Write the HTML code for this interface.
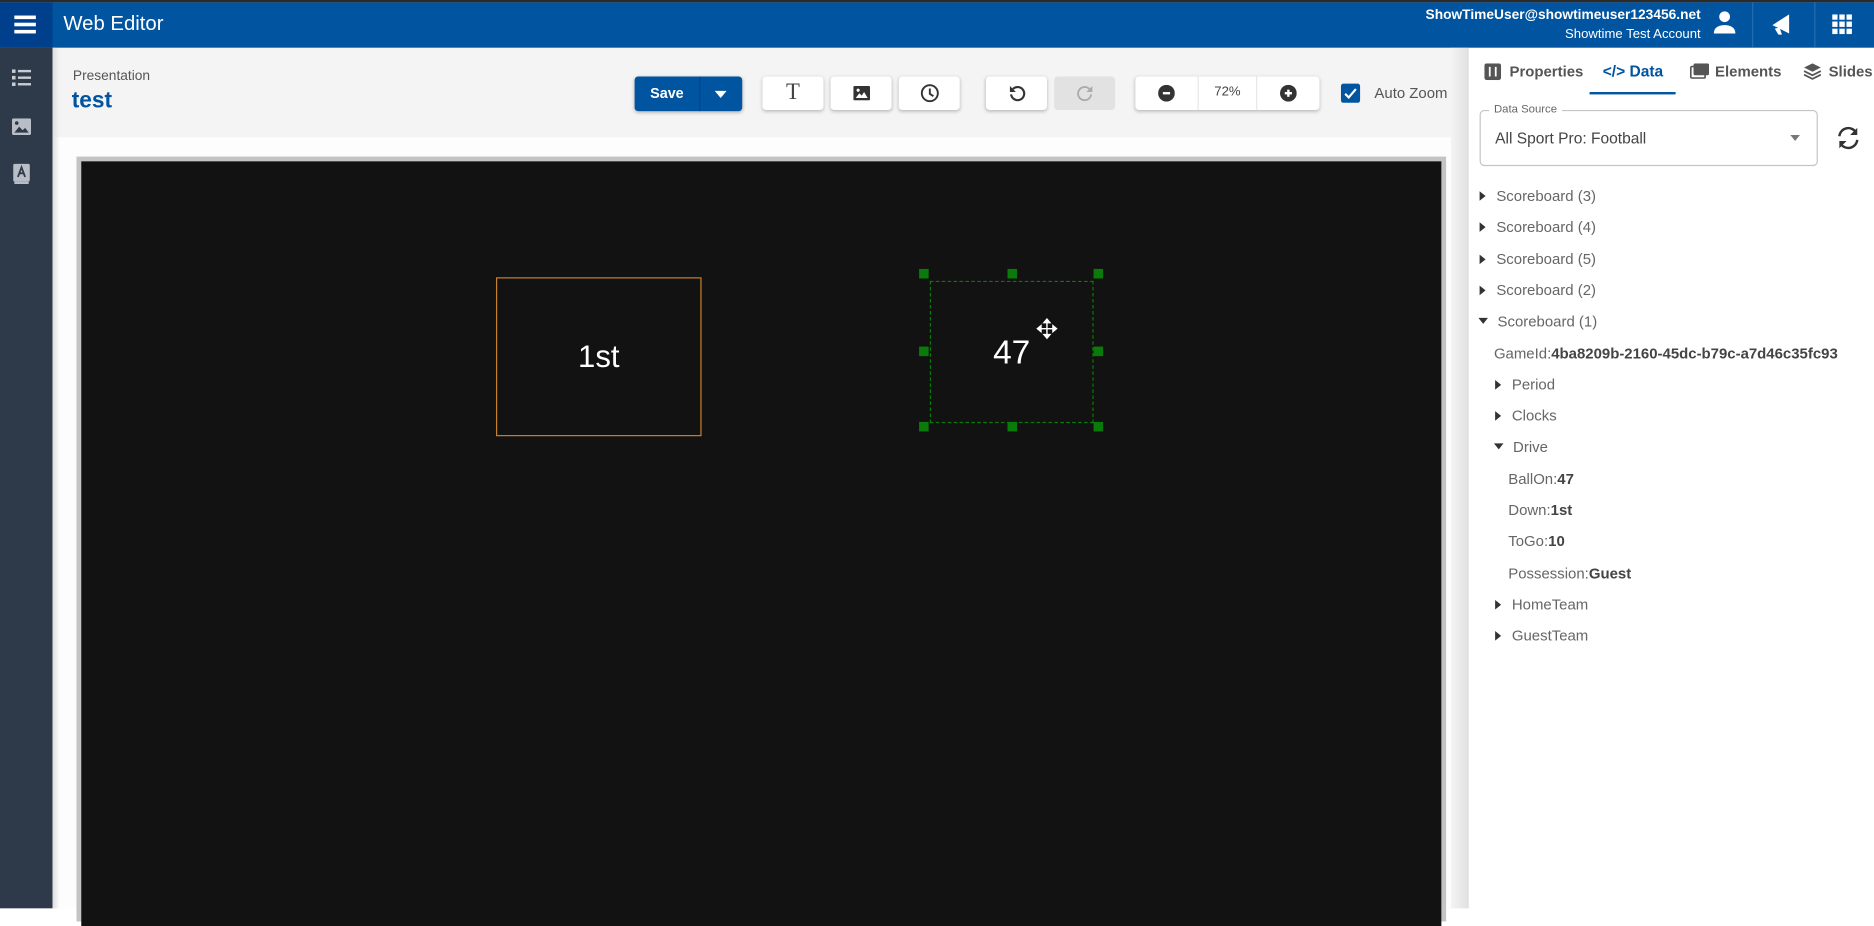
<!DOCTYPE html>
<html><head><meta charset="utf-8"><style>
html,body{margin:0;padding:0;width:1874px;height:872px;overflow:hidden;background:#fff;font-family:"Liberation Sans",sans-serif}
#w{position:absolute;left:0;top:0;width:1568px;height:760px;transform:scale(1.19515);transform-origin:0 0;background:#f4f4f4}
.a{position:absolute}
.btn{position:absolute;background:#fff;border-radius:3px;box-shadow:0 1px 3px rgba(0,0,0,.25);height:28px;top:64px;display:flex;align-items:center;justify-content:center}
.tr{position:absolute;font-size:12.5px;color:#666;white-space:nowrap}
.tr b{color:#444}
.ar{display:inline-block;width:0;height:0;border-top:4px solid transparent;border-bottom:4px solid transparent;border-left:5px solid #333;margin-right:9px;vertical-align:0}
.dn{display:inline-block;width:0;height:0;border-left:4px solid transparent;border-right:4px solid transparent;border-top:5px solid #333;margin-right:8px;vertical-align:2px}
</style></head><body><div id="w">
<div class="a" style="left:0;top:0;width:1568px;height:2px;background:#2a2a2a"></div>
<div class="a" style="left:0;top:2px;width:1568px;height:38px;background:#0054a0"></div>
<div class="a" style="left:0;top:2px;width:44px;height:38px;background:#003f8c"></div>
<div class="a" style="left:12px;top:13px;width:18px;height:3px;background:#fff;box-shadow:0 6px 0 #fff,0 12px 0 #fff"></div>
<div class="a" style="left:53px;top:10px;color:#fff;font-size:17px">Web Editor</div>
<div class="a" style="right:145px;top:7px;color:#fff;font-size:11.5px;font-weight:bold;text-align:right">ShowTimeUser@showtimeuser123456.net</div>
<div class="a" style="right:145px;top:23px;color:#fff;font-size:11px;text-align:right">Showtime Test Account</div>
<svg class="a" style="left:1432px;top:8px" width="22" height="22" viewBox="0 0 22 22"><circle cx="11" cy="6" r="4.5" fill="#fff"/><path d="M2 20c0-5 4-7 9-7s9 2 9 7z" fill="#fff"/></svg>
<div class="a" style="left:1466px;top:2px;width:1px;height:38px;background:#2a6ab0"></div>
<svg class="a" style="left:1481px;top:9px" width="24" height="22" viewBox="0 0 24 22"><path d="M2 12l14-9v16z" fill="#fff"/><path d="M4 15l3 5h3l-2-6z" fill="#fff"/></svg>
<div class="a" style="left:1518px;top:2px;width:1px;height:38px;background:#2a6ab0"></div>
<svg class="a" style="left:1533px;top:12px" width="17" height="17" viewBox="0 0 17 17" fill="#fff"><rect x="0" y="0" width="4.5" height="4.5"/><rect x="6" y="0" width="4.5" height="4.5"/><rect x="12" y="0" width="4.5" height="4.5"/><rect x="0" y="6" width="4.5" height="4.5"/><rect x="6" y="6" width="4.5" height="4.5"/><rect x="12" y="6" width="4.5" height="4.5"/><rect x="0" y="12" width="4.5" height="4.5"/><rect x="6" y="12" width="4.5" height="4.5"/><rect x="12" y="12" width="4.5" height="4.5"/></svg>
<div class="a" style="left:0;top:40px;width:44px;height:720px;background:#2e3a4a"></div>
<svg class="a" style="left:10px;top:58px" width="16" height="14" viewBox="0 0 16 14" fill="#c8ccd2"><rect x="0" y="0" width="3" height="3"/><rect x="5" y="0.5" width="11" height="2"/><rect x="0" y="5.5" width="3" height="3"/><rect x="5" y="6" width="11" height="2"/><rect x="0" y="11" width="3" height="3"/><rect x="5" y="11.5" width="11" height="2"/></svg>
<svg class="a" style="left:10px;top:99px" width="16" height="14" viewBox="0 0 16 14"><rect width="16" height="14" rx="1.5" fill="#b9bec6"/><path d="M2 12l4-5 3 3 2-2 3 4z" fill="#2e3a4a"/><circle cx="4" cy="4" r="1.5" fill="#2e3a4a"/></svg>
<svg class="a" style="left:11px;top:137px" width="14" height="17" viewBox="0 0 14 17"><rect width="14" height="15" rx="1.5" fill="#b9bec6"/><path d="M4 11l3-8 3 8M5 8h4" stroke="#2e3a4a" stroke-width="1.5" fill="none"/><rect x="1" y="15" width="12" height="2" fill="#b9bec6"/></svg>
<div class="a" style="left:44px;top:40px;width:1185px;height:75px;background:#f4f4f4"></div>
<div class="a" style="left:44px;top:115px;width:1185px;height:645px;background:#fdfdfd"></div>
<div class="a" style="left:44px;top:40px;width:6px;height:720px;background:linear-gradient(90deg,#ddd,rgba(255,255,255,0))"></div>
<div class="a" style="left:61px;top:58px;font-size:11.5px;color:#555">Presentation</div>
<div class="a" style="left:60px;top:74px;font-size:19px;font-weight:bold;color:#0054a0">test</div>
<div class="a" style="left:531px;top:64px;width:90px;height:29px;background:#0054a0;border-radius:3px;box-shadow:0 1px 3px rgba(0,0,0,.3)"></div>
<div class="a" style="left:585px;top:64px;width:1px;height:29px;background:#00458a"></div>
<div class="a" style="left:544px;top:71px;color:#fff;font-size:12px;font-weight:bold">Save</div>
<div class="a" style="left:598px;top:76px;border-left:5px solid transparent;border-right:5px solid transparent;border-top:6px solid #fff"></div>
<div class="btn" style="left:638px;width:51px"><span style="font-family:'Liberation Serif',serif;font-size:19px;color:#444">T</span></div>
<div class="btn" style="left:695px;width:51px"><svg width="14" height="12" viewBox="0 0 14 12"><rect width="14" height="12" rx="1" fill="#333"/><path d="M2 10l3-4 2 2 2-3 3 5z" fill="#fff"/><circle cx="4" cy="3.5" r="1.3" fill="#fff"/></svg></div>
<div class="btn" style="left:752px;width:51px"><svg width="16" height="16" viewBox="0 0 16 16"><circle cx="8" cy="8" r="6.7" fill="none" stroke="#333" stroke-width="1.6"/><path d="M8 4v4.5l3 2" fill="none" stroke="#333" stroke-width="1.6"/></svg></div>
<div class="btn" style="left:825px;width:51px"><svg width="16" height="16" viewBox="0 0 16 16"><path d="M4.5 4.5A5.5 5.5 0 1 1 3 9" fill="none" stroke="#333" stroke-width="1.8"/><path d="M2 2v5h5z" fill="#333"/></svg></div>
<div class="btn" style="left:882px;width:51px;background:#e2e2e2;box-shadow:none"><svg width="16" height="16" viewBox="0 0 16 16"><path d="M11.5 4.5A5.5 5.5 0 1 0 13 9" fill="none" stroke="#aaa" stroke-width="1.5"/><path d="M14 2v5H9z" fill="#aaa"/></svg></div>
<div class="btn" style="left:950px;width:154px"></div>
<div class="a" style="left:1002px;top:64px;width:1px;height:28px;background:#e6e6e6"></div>
<div class="a" style="left:1051px;top:64px;width:1px;height:28px;background:#e6e6e6"></div>
<svg class="a" style="left:969px;top:71px" width="14" height="14"><circle cx="7" cy="7" r="7" fill="#333"/><rect x="4" y="6" width="6" height="2" fill="#fff"/></svg>
<svg class="a" style="left:1071px;top:71px" width="14" height="14"><circle cx="7" cy="7" r="7" fill="#333"/><rect x="4" y="6" width="6" height="2" fill="#fff"/><rect x="6" y="4" width="2" height="6" fill="#fff"/></svg>
<div class="a" style="left:1016px;top:71px;font-size:11px;color:#444">72%</div>
<div class="a" style="left:1122px;top:70px;width:16px;height:16px;background:#0054a0;border-radius:2px"></div>
<svg class="a" style="left:1122px;top:70px" width="16" height="16"><path d="M3.5 8.5l3 3 6-7" fill="none" stroke="#fff" stroke-width="1.8"/></svg>
<div class="a" style="left:1150px;top:71px;font-size:12.5px;color:#555">Auto Zoom</div>
<div class="a" style="left:64px;top:131px;width:1146px;height:640px;background:#c4c4c4"></div>
<div class="a" style="left:68px;top:135px;width:1138px;height:640px;background:#121212"></div>
<div class="a" style="left:415px;top:232px;width:170px;height:131px;border:1px solid #c8812c;color:#fff;font-size:26px;display:flex;align-items:center;justify-content:center">1st</div>
<div class="a" style="left:778px;top:235px;width:135px;height:117px;border:1.5px dashed #0a7a0a;color:#fff;font-size:28px;display:flex;align-items:center;justify-content:center">47</div>
<div class="a" style="left:769px;top:225px;width:8px;height:8px;background:#0a7a0a"></div>
<div class="a" style="left:843px;top:225px;width:8px;height:8px;background:#0a7a0a"></div>
<div class="a" style="left:915px;top:225px;width:8px;height:8px;background:#0a7a0a"></div>
<div class="a" style="left:769px;top:290px;width:8px;height:8px;background:#0a7a0a"></div>
<div class="a" style="left:915px;top:290px;width:8px;height:8px;background:#0a7a0a"></div>
<div class="a" style="left:769px;top:353px;width:8px;height:8px;background:#0a7a0a"></div>
<div class="a" style="left:843px;top:353px;width:8px;height:8px;background:#0a7a0a"></div>
<div class="a" style="left:915px;top:353px;width:8px;height:8px;background:#0a7a0a"></div>
<svg class="a" style="left:867px;top:266px" width="18" height="18" viewBox="0 0 18 18"><path d="M9 1v16M1 9h16M9 1l-2.5 3h5zM9 17l-2.5-3h5zM1 9l3-2.5v5zM17 9l-3-2.5v5z" stroke="#fff" stroke-width="1.2" fill="#fff"/></svg>
<div class="a" style="left:1214px;top:40px;width:15px;height:720px;background:linear-gradient(90deg,#f4f4f4,#e0e0e0)"></div>
<div class="a" style="left:1229px;top:40px;width:339px;height:720px;background:#fff"></div>
<svg class="a" style="left:1242px;top:53px" width="14" height="14"><rect width="14" height="14" rx="2" fill="#555"/><path d="M4.5 3v8M9.5 3v8" stroke="#fff" stroke-width="1.5"/></svg>
<div class="a" style="left:1263px;top:53px;font-size:12.5px;color:#555;font-weight:bold">Properties</div>
<div class="a" style="left:1341px;top:52px;font-size:13px;color:#0054a0;font-weight:bold">&lt;/&gt; Data</div>
<div class="a" style="left:1330px;top:77px;width:72px;height:2px;background:#0054a0"></div>
<svg class="a" style="left:1414px;top:53px" width="16" height="13"><rect x="3" y="0" width="13" height="10" rx="1.5" fill="#555"/><rect x="0.7" y="2.7" width="12" height="9.6" rx="1" fill="none" stroke="#555" stroke-width="1.4"/></svg>
<div class="a" style="left:1435px;top:53px;font-size:12.5px;color:#555;font-weight:bold">Elements</div>
<svg class="a" style="left:1509px;top:52px" width="15" height="15"><path d="M7.5 1l7 3.5-7 3.5-7-3.5z" fill="#555"/><path d="M.5 7.5l7 3.5 7-3.5M.5 10.5l7 3.5 7-3.5" fill="none" stroke="#555" stroke-width="1.5"/></svg>
<div class="a" style="left:1530px;top:53px;font-size:12.5px;color:#555;font-weight:bold">Slides</div>
<div class="a" style="left:1238px;top:92px;width:281px;height:45px;border:1px solid #c4c4c4;border-radius:4px"></div>
<div class="a" style="left:1246px;top:86px;padding:0 4px;background:#fff;font-size:9.5px;color:#666">Data Source</div>
<div class="a" style="left:1251px;top:108px;font-size:13px;color:#444">All Sport Pro: Football</div>
<div class="a" style="left:1498px;top:113px;border-left:4px solid transparent;border-right:4px solid transparent;border-top:5px solid #777"></div>
<svg class="a" style="left:1536px;top:105px" width="21" height="21" viewBox="0 0 21 21"><path d="M3 9A7.5 7.5 0 0 1 17 6M18 12A7.5 7.5 0 0 1 4 15" fill="none" stroke="#333" stroke-width="2"/><path d="M18 2v6h-6zM3 19v-6h6z" fill="#333"/></svg>
<div class="tr" style="left:1238px;top:157px"><span class="ar"></span>Scoreboard (3)</div>
<div class="tr" style="left:1238px;top:183px"><span class="ar"></span>Scoreboard (4)</div>
<div class="tr" style="left:1238px;top:210px"><span class="ar"></span>Scoreboard (5)</div>
<div class="tr" style="left:1238px;top:236px"><span class="ar"></span>Scoreboard (2)</div>
<div class="tr" style="left:1237px;top:262px"><span class="dn"></span>Scoreboard (1)</div>
<div class="tr" style="left:1250px;top:289px">GameId:<b>4ba8209b-2160-45dc-b79c-a7d46c35fc93</b></div>
<div class="tr" style="left:1251px;top:315px"><span class="ar"></span>Period</div>
<div class="tr" style="left:1251px;top:341px"><span class="ar"></span>Clocks</div>
<div class="tr" style="left:1250px;top:367px"><span class="dn"></span>Drive</div>
<div class="tr" style="left:1262px;top:394px">BallOn:<b>47</b></div>
<div class="tr" style="left:1262px;top:420px">Down:<b>1st</b></div>
<div class="tr" style="left:1262px;top:446px">ToGo:<b>10</b></div>
<div class="tr" style="left:1262px;top:473px">Possession:<b>Guest</b></div>
<div class="tr" style="left:1251px;top:499px"><span class="ar"></span>HomeTeam</div>
<div class="tr" style="left:1251px;top:525px"><span class="ar"></span>GuestTeam</div>
</div></body></html>
